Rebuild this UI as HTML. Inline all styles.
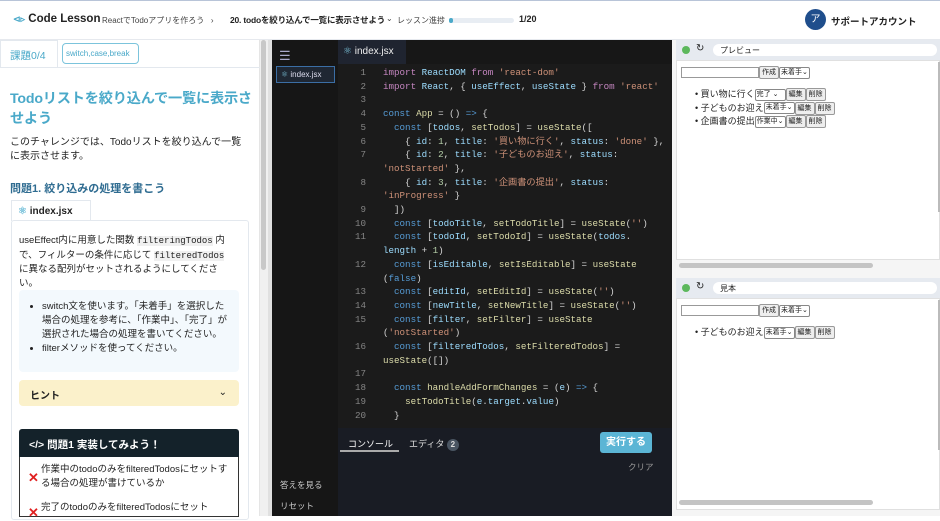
<!DOCTYPE html>
<html><head><meta charset="utf-8"><style>
*{box-sizing:border-box;margin:0;padding:0}
body{width:940px;height:516px;overflow:hidden;font-family:"Liberation Sans","Noto Sans CJK JP",sans-serif;background:#fff;position:relative;color:#222}
.abs{position:absolute;white-space:nowrap}
.wr{white-space:normal}
.hdr{left:0;top:0;width:940px;height:40px;border-top:1px solid #b8c4d8;border-bottom:1px solid #e6e9ee;background:#fff}
.code{font-family:"Liberation Mono","Noto Sans CJK JP",monospace;font-size:9.2px;white-space:pre;line-height:13.7px}
.k{color:#c586c0}.b{color:#569cd6}.s{color:#ce9178}.v{color:#9cdcfe}.f{color:#dcdcaa}.w{color:#d4d4d4}.n{color:#b5cea8}
.ln{color:#858585;text-align:right;width:30px}
.pv{font-size:9px}
.btn{display:inline-block;border:1px solid #999;background:#eee;border-radius:2px;padding:0 2px;font-size:7px;line-height:11px;vertical-align:middle}
.sel{display:inline-block;border:1px solid #888;background:#fff;border-radius:2px;padding:0 1px;font-size:7px;line-height:10px;vertical-align:middle}
</style></head><body>
<div class="abs hdr"></div>
<div class="abs" style="left:13px;top:13px;font-size:11.5px;font-weight:bold;color:#222"><span style="color:#4aa9c9;font-size:9px">⊲▹</span> Code Lesson</div>
<div class="abs" style="left:102px;top:15px;font-size:8px;color:#444">ReactでTodoアプリを作ろう &nbsp;&nbsp;›</div>
<div class="abs" style="left:230px;top:14px;font-size:8.5px;font-weight:bold;color:#222;letter-spacing:-0.2px">20. todoを絞り込んで一覧に表示させよう</div>
<div class="abs" style="left:386px;top:14px;font-size:8px;color:#444">⌄</div>
<div class="abs" style="left:397px;top:15px;font-size:8px;color:#444">レッスン進捗</div>
<div class="abs" style="left:449px;top:18px;width:65px;height:5px;border-radius:3px;background:#e8edf3"><div style="width:4px;height:5px;background:#4aa9c9;border-radius:3px"></div></div>
<div class="abs" style="left:519px;top:14px;font-size:9px;font-weight:bold">1/20</div>
<div class="abs" style="left:805px;top:9px;width:21px;height:21px;border-radius:50%;background:#1f4e8c;color:#fff;font-size:10px;text-align:center;line-height:21px">ア</div>
<div class="abs" style="left:831px;top:14px;font-size:9.5px;font-weight:bold">サポートアカウント</div>

<!-- left panel -->
<div class="abs" style="left:0;top:40px;width:260px;height:476px;background:#fff;border-right:1px solid #e5e5e5"></div>
<div class="abs" style="left:0;top:40px;width:58px;height:28px;border:1px solid #e3e8ee;border-bottom:none;font-size:10.5px;color:#4aa9c9;padding:7px 9px;background:#fff">課題0/4</div>
<div class="abs" style="left:0;top:67px;width:260px;height:1px;background:#e3e8ee"></div>
<div class="abs" style="left:62px;top:43px;width:77px;height:21px;border:1px solid #7cc4dc;border-radius:4px;font-size:8px;color:#4aa9c9;padding:5px 3px">switch,case,break</div>
<div class="abs wr" style="left:10px;top:89px;width:248px;font-size:14.2px;font-weight:bold;color:#4aa9c9;line-height:20px;letter-spacing:-0.2px">Todoリストを絞り込んで一覧に表示させよう</div>
<div class="abs wr" style="left:10px;top:136px;width:238px;font-size:10px;line-height:14px">このチャレンジでは、Todoリストを絞り込んで一覧に表示させます。</div>
<div class="abs" style="left:10px;top:180px;font-size:11px;font-weight:bold;color:#2f6c91">問題1. 絞り込みの処理を書こう</div>
<div class="abs" style="left:11px;top:200px;width:80px;height:21px;border:1px solid #e3e8ee;border-bottom:none;background:#fff;font-size:10px;font-weight:bold;padding:5px 6px"><span style="color:#7cc4dc">⚛</span> index.jsx</div>
<div class="abs" style="left:11px;top:220px;width:238px;height:300px;border:1px solid #e3e8ee;border-radius:3px"></div>
<div class="abs wr" style="left:19px;top:234px;width:216px;font-size:9.5px;line-height:13.5px">useEffect内に用意した関数 <span style="font-family:'Liberation Mono',monospace;background:#f0f0f0;font-size:9px">filteringTodos</span> 内で、フィルターの条件に応じて <span style="font-family:'Liberation Mono',monospace;background:#f0f0f0;font-size:9px">filteredTodos</span> に異なる配列がセットされるようにしてください。</div>
<div class="abs" style="left:19px;top:290px;width:220px;height:82px;background:#f3f9fd;border-radius:4px"></div>
<ul class="abs wr" style="left:42px;top:300px;width:185px;font-size:9.5px;line-height:14px">
<li>switch文を使います。「未着手」を選択した場合の処理を参考に、「作業中」、「完了」が選択された場合の処理を書いてください。</li><li>filterメソッドを使ってください。</li></ul>
<div class="abs" style="left:19px;top:380px;width:220px;height:26px;background:#fbf1cb;border-radius:4px;font-size:10px;font-weight:bold;padding:7px 11px">ヒント<span style="position:absolute;right:12px;font-weight:normal">⌄</span></div>
<div class="abs" style="left:19px;top:429px;width:220px;height:28px;background:#14222a;border-radius:3px 3px 0 0;color:#fff;font-size:10.5px;font-weight:bold;padding:8px 10px">&lt;/&gt; 問題1 実装してみよう！</div>
<div class="abs" style="left:19px;top:457px;width:220px;height:60px;border:1px solid #333;border-top:none"></div>
<div class="abs wr" style="left:41px;top:463px;width:192px;font-size:9.5px;line-height:14px">作業中のtodoのみをfilteredTodosにセットする場合の処理が書けているか</div>
<div class="abs" style="left:28px;top:470px;color:#e02020;font-size:13px;font-weight:bold">✕</div>
<div class="abs" style="left:41px;top:499px;font-size:9.5px">完了のtodoのみをfilteredTodosにセット</div>
<div class="abs" style="left:28px;top:505px;color:#e02020;font-size:13px;font-weight:bold">✕</div>
<div class="abs" style="left:260px;top:40px;width:8px;height:476px;background:#f0f0f0"></div>
<div class="abs" style="left:261px;top:40px;width:5px;height:230px;background:#c8c8c8;border-radius:3px"></div>
<div class="abs" style="left:268px;top:40px;width:4px;height:476px;background:#e0e0e0"></div>

<!-- editor -->
<div class="abs" style="left:272px;top:40px;width:66px;height:476px;background:#161616"></div>
<div class="abs" style="left:279px;top:48px;color:#aac;font-size:13px">☰</div>
<div class="abs" style="left:276px;top:66px;width:59px;height:17px;border:1px solid #3b6ea5;background:#1f2733;color:#dde;font-size:8px;padding:3px 4px"><span style="color:#7cc4dc">⚛</span> index.jsx</div>
<div class="abs" style="left:280px;top:479px;color:#ccc;font-size:8.5px">答えを見る</div>
<div class="abs" style="left:280px;top:500px;color:#ccc;font-size:8.5px">リセット</div>
<div class="abs" style="left:338px;top:40px;width:334px;height:388px;background:#1b1b1b;overflow:hidden"></div>
<div class="abs" style="left:338px;top:40px;width:334px;height:24px;background:#171717"></div>
<div class="abs" style="left:338px;top:40px;width:68px;height:24px;background:#1f2430;color:#eee;font-size:10px;padding:6px 5px"><span style="color:#7cc4dc">⚛</span> index.jsx</div>
<div class="abs code ln" style="left:336px;top:66px">1
2
3
4
5
6
7

8

9
10
11

12

13
14
15

16

17
18
19
20</div>
<div class="abs" style="left:383px;top:66px;width:287px;height:360px;overflow:hidden"><div class="code w"><span class="k">import</span> <span class="v">ReactDOM</span> <span class="k">from</span> <span class="s">'react-dom'</span>
<span class="k">import</span> <span class="v">React</span>, { <span class="v">useEffect</span>, <span class="v">useState</span> } <span class="k">from</span> <span class="s">'react'</span>

<span class="b">const</span> <span class="f">App</span> = () <span class="b">=&gt;</span> {
  <span class="b">const</span> [<span class="v">todos</span>, <span class="f">setTodos</span>] = <span class="f">useState</span>([
    { <span class="v">id</span>: <span class="n">1</span>, <span class="v">title</span>: <span class="s">'買い物に行く'</span>, <span class="v">status</span>: <span class="s">'done'</span> },
    { <span class="v">id</span>: <span class="n">2</span>, <span class="v">title</span>: <span class="s">'子どものお迎え'</span>, <span class="v">status</span>:
<span class="s">'notStarted'</span> },
    { <span class="v">id</span>: <span class="n">3</span>, <span class="v">title</span>: <span class="s">'企画書の提出'</span>, <span class="v">status</span>:
<span class="s">'inProgress'</span> }
  ])
  <span class="b">const</span> [<span class="v">todoTitle</span>, <span class="f">setTodoTitle</span>] = <span class="f">useState</span>(<span class="s">''</span>)
  <span class="b">const</span> [<span class="v">todoId</span>, <span class="f">setTodoId</span>] = <span class="f">useState</span>(<span class="v">todos</span>.
<span class="v">length</span> + <span class="n">1</span>)
  <span class="b">const</span> [<span class="v">isEditable</span>, <span class="f">setIsEditable</span>] = <span class="f">useState</span>
(<span class="b">false</span>)
  <span class="b">const</span> [<span class="v">editId</span>, <span class="f">setEditId</span>] = <span class="f">useState</span>(<span class="s">''</span>)
  <span class="b">const</span> [<span class="v">newTitle</span>, <span class="f">setNewTitle</span>] = <span class="f">useState</span>(<span class="s">''</span>)
  <span class="b">const</span> [<span class="v">filter</span>, <span class="f">setFilter</span>] = <span class="f">useState</span>
(<span class="s">'notStarted'</span>)
  <span class="b">const</span> [<span class="v">filteredTodos</span>, <span class="f">setFilteredTodos</span>] =
<span class="f">useState</span>([])

  <span class="b">const</span> <span class="f">handleAddFormChanges</span> = (<span class="v">e</span>) <span class="b">=&gt;</span> {
    <span class="f">setTodoTitle</span>(<span class="v">e</span>.<span class="v">target</span>.<span class="v">value</span>)
  }</div></div>
<div class="abs" style="left:338px;top:428px;width:334px;height:88px;background:#191c24"></div>
<div class="abs" style="left:348px;top:437px;color:#fff;font-size:9px">コンソール</div>
<div class="abs" style="left:340px;top:450px;width:59px;height:2px;background:#aaa"></div>
<div class="abs" style="left:409px;top:437px;color:#ddd;font-size:9px">エディタ <span style="display:inline-block;width:12px;height:12px;border-radius:50%;background:#4a5562;text-align:center;line-height:12px;font-size:8px;font-weight:bold">2</span></div>
<div class="abs" style="left:600px;top:432px;width:52px;height:21px;background:#5bb5d5;border-radius:3px;color:#fff;font-size:10px;font-weight:bold;text-align:center;line-height:21px">実行する</div>
<div class="abs" style="left:628px;top:461px;color:#999;font-size:8.5px">クリア</div>

<!-- preview -->
<div class="abs" style="left:672px;top:40px;width:268px;height:476px;background:#f5f5f5"></div>
<div class="abs" style="left:676px;top:40px;width:264px;height:20px;background:#e6eaf0"></div>
<div class="abs" style="left:682px;top:46px;width:8px;height:8px;border-radius:50%;background:#5cb85c"></div>
<div class="abs" style="left:696px;top:43px;font-size:10px">↻</div>
<div class="abs" style="left:713px;top:44px;width:224px;height:12px;background:#fff;border-radius:6px;font-size:8px;padding:1px 7px">プレビュー</div>
<div class="abs" style="left:676px;top:60px;width:264px;height:200px;background:#fff;border:1px solid #e0e0e0"></div>
<div class="abs" style="left:938px;top:62px;width:2px;height:150px;background:#bbb"></div>
<div class="abs" style="left:679px;top:263px;width:194px;height:5px;background:#c4c4c4;border-radius:3px"></div>
<div class="abs pv" style="left:681px;top:66px"><span style="display:inline-block;width:78px;height:11px;border:1px solid #999;vertical-align:middle"></span><span class="btn">作成</span><span class="sel">未着手⌄</span></div>
<div class="abs pv" style="left:695px;top:88px;line-height:13.5px">• 買い物に行く<span class="sel" style="width:31px">完了 ⌄</span><span class="btn">編集</span><span class="btn">削除</span><br>• 子どものお迎え<span class="sel">未着手⌄</span><span class="btn">編集</span><span class="btn">削除</span><br>• 企画書の提出<span class="sel">作業中⌄</span><span class="btn">編集</span><span class="btn">削除</span></div>

<div class="abs" style="left:676px;top:278px;width:264px;height:20px;background:#e6eaf0"></div>
<div class="abs" style="left:682px;top:284px;width:8px;height:8px;border-radius:50%;background:#5cb85c"></div>
<div class="abs" style="left:696px;top:281px;font-size:10px">↻</div>
<div class="abs" style="left:713px;top:282px;width:224px;height:12px;background:#fff;border-radius:6px;font-size:8px;padding:1px 7px">見本</div>
<div class="abs" style="left:676px;top:298px;width:264px;height:212px;background:#fff;border:1px solid #e0e0e0"></div>
<div class="abs" style="left:938px;top:300px;width:2px;height:150px;background:#bbb"></div>
<div class="abs" style="left:679px;top:500px;width:194px;height:5px;background:#c4c4c4;border-radius:3px"></div>
<div class="abs pv" style="left:681px;top:304px"><span style="display:inline-block;width:78px;height:11px;border:1px solid #999;vertical-align:middle"></span><span class="btn">作成</span><span class="sel">未着手⌄</span></div>
<div class="abs pv" style="left:695px;top:326px;line-height:13.5px">• 子どものお迎え<span class="sel">未着手⌄</span><span class="btn">編集</span><span class="btn">削除</span></div>
</body></html>
